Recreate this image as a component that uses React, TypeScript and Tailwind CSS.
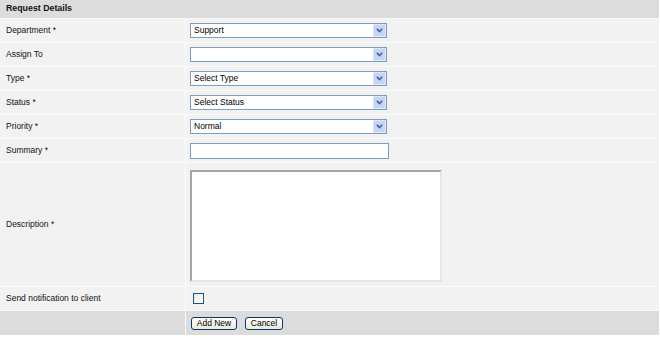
import { ReactNode } from 'react';

// --- Dropdown that mimics the old XP-style select box ---
const Dropdown = ({ value }: { value: string }) => (
  <div className="relative w-[197px] h-[15px]">
    <select
      defaultValue={value}
      className="block appearance-none w-full h-full bg-white border border-[#7f9db9] pl-[3px] text-[8.5px] leading-[13px] text-black outline-none"
    >
      <option>{value}</option>
    </select>
    {/* arrow button over the right edge */}
    <div className="absolute right-[1px] top-[1px] w-[13px] h-[13px] bg-[#c4d4f7] border border-[#dfe7fb] flex items-center justify-center pointer-events-none">
      <svg width="7" height="5" viewBox="0 0 7 5" className="block">
        <path d="M0.8 0.8 L3.5 3.6 L6.2 0.8" fill="none" stroke="#4d6185" strokeWidth="1.6" />
      </svg>
    </div>
  </div>
);

const Label = ({ children, tall }: { children: ReactNode; tall?: boolean }) => (
  <div className={`bg-[#f2f2f2] flex items-center pl-[6px] text-[8.5px] text-[#111] ${tall ? 'h-[123px]' : 'h-[23px]'}`}>
    {children}
  </div>
);

const Field = ({ children, tall }: { children: ReactNode; tall?: boolean }) => (
  <div className={`bg-[#f2f2f2] flex items-center pl-[4px] ${tall ? 'h-[123px]' : 'h-[23px]'}`}>
    {children}
  </div>
);

const selects = [
  { label: 'Department *', value: 'Support' },
  { label: 'Assign To', value: '' },
  { label: 'Type *', value: 'Select Type' },
  { label: 'Status *', value: 'Select Status' },
  { label: 'Priority *', value: 'Normal' },
];

const App = () => {
  return (
    <div className="w-[660px] h-[339px] bg-white" style={{ fontFamily: '"Liberation Sans", Arial, sans-serif' }}>
      <div className="w-[659px] grid grid-cols-[185px_1fr] gap-px bg-[#fafafa]">
        {/* Section header */}
        <div className="col-span-2 h-[18px] bg-[#dcdcdc] flex items-center pl-[6px] text-[8.8px] font-bold text-[#111]">
          Request Details
        </div>

        {selects.map((s) => (
          <div key={s.label} className="contents">
            <Label>{s.label}</Label>
            <Field>
              <Dropdown value={s.value} />
            </Field>
          </div>
        ))}

        <Label>Summary *</Label>
        <Field>
          <input
            type="text"
            className="block w-[199px] h-[16px] bg-white border border-[#7f9db9] outline-none text-[8.5px] px-[2px]"
          />
        </Field>

        <Label tall>Description *</Label>
        <Field tall>
          <textarea
            className="block w-[252px] h-[112px] mt-[2px] bg-white border-2 border-t-[#a5a5a5] border-l-[#a5a5a5] border-r-[#e6e6e6] border-b-[#e6e6e6] outline-none resize-none"
          />
        </Field>

        <Label>Send notification to client</Label>
        <Field>
          <div className="ml-[3px] w-[11px] h-[11px] bg-gradient-to-br from-[#e6e6e0] to-white border border-[#1c5180]" />
        </Field>

        {/* Footer with actions */}
        <div className="h-[24px] bg-[#dcdcdc]" />
        <div className="h-[24px] bg-[#dcdcdc] flex items-center pl-[5px] gap-[8px]">
          <button className="h-[13px] w-[46px] rounded-[3px] border border-[#003c74] bg-gradient-to-b from-white to-[#ece9d8] text-[8.5px] leading-none text-black">
            Add New
          </button>
          <button className="h-[13px] w-[38px] rounded-[3px] border border-[#003c74] bg-gradient-to-b from-white to-[#ece9d8] text-[8.5px] leading-none text-black">
            Cancel
          </button>
        </div>
      </div>
    </div>
  );
};

export default App;
